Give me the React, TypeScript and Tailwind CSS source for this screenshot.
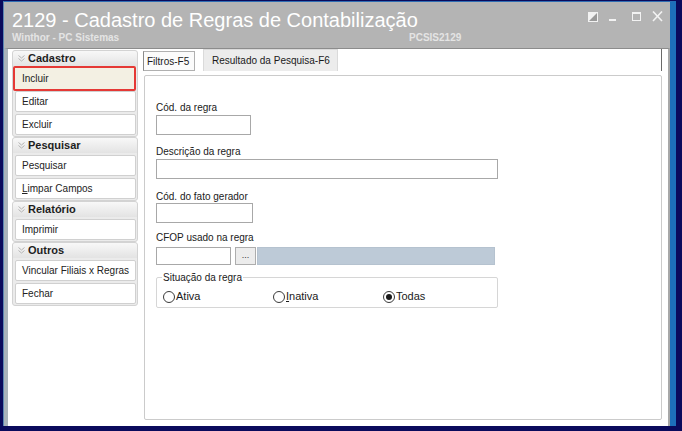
import React from "react";

const groups = [
  { title: "Cadastro", items: ["Incluir", "Editar", "Excluir"] },
  { title: "Pesquisar", items: ["Pesquisar", "Limpar Campos"] },
  { title: "Relatório", items: ["Imprimir"] },
  { title: "Outros", items: ["Vincular Filiais x Regras", "Fechar"] },
];

function Chevron() {
  return (
    <svg width="7" height="7" viewBox="0 0 7 7" className="shrink-0">
      <path d="M0.5 0.5 L3.5 3 L6.5 0.5" fill="none" stroke="#b4b4b4" strokeWidth="1" />
      <path d="M0.5 3.5 L3.5 6 L6.5 3.5" fill="none" stroke="#b4b4b4" strokeWidth="1" />
    </svg>
  );
}

function Radio({ label, checked, underline }: { label: string; checked?: boolean; underline?: boolean }) {
  return (
    <div className="w-[110px] flex items-center h-[13px]">
      <div className="w-[12px] h-[12px] rounded-full border border-[#3a3a3a] bg-white flex items-center justify-center shrink-0">
        {checked && <div className="w-[6px] h-[6px] rounded-full bg-[#1a1a1a]" />}
      </div>
      <span className="ml-[1px] text-[11px] leading-[13px] text-[#1a1a1a]">
        {underline ? (
          <>
            <span className="underline">{label[0]}</span>
            {label.slice(1)}
          </>
        ) : (
          label
        )}
      </span>
    </div>
  );
}

function Label({ children, className = "" }: { children: React.ReactNode; className?: string }) {
  return <div className={"text-[10px] leading-[13px] text-[#1a1a1a] h-[13px] " + className}>{children}</div>;
}

export default function App() {
  return (
    <div className="w-[682px] h-[431px] bg-[#0a0a5c] pt-[1px] pl-[3px] pr-[6px] pb-[5px] font-['Liberation_Sans',Arial,sans-serif] overflow-hidden">
      <div className="h-full flex flex-col border-t border-t-[#2f6db3] border-l border-l-[#5b86b3] border-r-[6px] border-r-[#1d6fba]">
        {/* Title bar */}
        <div className="h-[46px] shrink-0 bg-[#b4b4b4] flex justify-between pl-[8px] pt-[7px]">
          <div className="flex flex-col">
            <div className="text-[20px] leading-[23px] text-white whitespace-nowrap">
              2129 - Cadastro de Regras de Contabilização
            </div>
            <div className="flex text-[10px] leading-[12px] font-bold text-[#e4e4e4] whitespace-nowrap">
              <span className="w-[397px]">Winthor - PC Sistemas</span>
              <span>PCSIS2129</span>
            </div>
          </div>
          <div className="flex items-start mt-[2px] pr-[7px]">
            <svg width="11" height="11" viewBox="0 0 11 11">
              <rect x="0.5" y="1.5" width="9" height="9" fill="#9a9a9a" stroke="#f2f2f2" strokeWidth="1" />
              <polygon points="0.5,1.5 9.5,1.5 0.5,10.5" fill="#f2f2f2" />
            </svg>
            <svg width="10" height="11" viewBox="0 0 10 11" className="ml-[9px]">
              <rect x="1" y="8" width="7" height="2" fill="#f2f2f2" />
            </svg>
            <svg width="11" height="11" viewBox="0 0 11 11" className="ml-[13px]">
              <rect x="1.5" y="1.5" width="8" height="8" fill="none" stroke="#f2f2f2" strokeWidth="1" />
              <rect x="1" y="1" width="9" height="2" fill="#f2f2f2" />
            </svg>
            <svg width="11" height="11" viewBox="0 0 11 11" className="ml-[10px]">
              <path d="M1 0.5 L10 10 M10 0.5 L1 10" stroke="#f2f2f2" strokeWidth="1.6" />
            </svg>
          </div>
        </div>

        {/* Body */}
        <div className="flex-1 flex bg-white border-l-[4px] border-l-[#a9b3ba] border-r-[2px] border-r-[#a8a8a8] border-t border-t-[#8c8c8c] min-h-0">
          {/* Sidebar */}
          <div className="w-[130px] shrink-0 pl-[4px] pt-[1px] flex flex-col">
            {groups.map((g) => (
              <div key={g.title} className="rounded-[3px] border border-[#d3d3d3] bg-[#ebebeb] flex flex-col">
                <div className="h-[15px] flex items-center pl-[5px] gap-[3px] rounded-t-[3px] bg-gradient-to-b from-[#f8f8f8] to-[#e3e3e3]">
                  <Chevron />
                  <span className="text-[11px] leading-[13px] font-bold text-[#1e1e1e]">{g.title}</span>
                </div>
                <div className="flex flex-col gap-[2px] pt-[2px] pl-[2px] pr-[1px] pb-[1px]">
                  {g.items.map((it) =>
                    it === "Incluir" ? (
                      <div
                        key={it}
                        className="-ml-[2px] -my-[2px] h-[25px] bg-[#f3f0e3] border-2 border-[#e53935] rounded-[2px] flex items-center pl-[7px] text-[10px] text-[#222]"
                      >
                        {it}
                      </div>
                    ) : (
                      <div
                        key={it}
                        className="h-[21px] bg-white border border-[#d0d0d0] rounded-[2px] flex items-center pl-[6px] text-[10px] text-[#222] whitespace-nowrap"
                      >
                        {it === "Limpar Campos" ? (
                          <span>
                            <span className="underline">L</span>impar Campos
                          </span>
                        ) : (
                          it
                        )}
                      </div>
                    )
                  )}
                </div>
              </div>
            ))}
          </div>

          {/* Main */}
          <div className="flex-1 flex flex-col pl-[5px] pr-[6px] pb-[6px] min-w-0">
            <div className="h-[22px] shrink-0 flex items-end border-r border-r-[#6a6a6a]">
              <div className="h-[20px] w-[52px] border border-[#b0b0b0] border-l-[#8a8a8a] bg-[#fbfbfb] flex items-center pl-[3px] text-[10px] text-[#1a1a1a]">
                Filtros-F5
              </div>
              <div className="h-[22px] w-[135px] ml-[8px] border border-[#dadada] border-b-0 bg-[#ececec] flex items-center pl-[8px] text-[10px] text-[#1a1a1a] whitespace-nowrap">
                Resultado da Pesquisa-F6
              </div>
            </div>
            <div className="flex-1 mt-[4px] ml-[1px] border border-[#cbcbcb] rounded-[2px] bg-white pl-[11px] pt-[25px] flex flex-col">
              <Label>Cód. da regra</Label>
              <div className="mt-[1px] w-[95px] h-[20px] border border-[#a8a8a8] bg-white" />
              <Label className="mt-[10px]">Descrição da regra</Label>
              <div className="mt-[1px] w-[342px] h-[20px] border border-[#a8a8a8] bg-white" />
              <Label className="mt-[11px]">Cód. do fato gerador</Label>
              <div className="w-[97px] h-[20px] border border-[#a8a8a8] bg-white" />
              <Label className="mt-[8px]">CFOP usado na regra</Label>
              <div className="mt-[3px] flex h-[18px]">
                <div className="w-[75px] h-full border border-[#a8a8a8] bg-white" />
                <div className="ml-[4px] w-[21px] h-full border border-[#adadad] bg-[#ececec] flex items-center justify-center text-[9px] leading-[9px] text-[#333] pb-[1px]">
                  ...
                </div>
                <div className="ml-[1px] w-[238px] h-full bg-[#bdcad7] border border-[#b5c2cf]" />
              </div>
              <fieldset className="mt-[6px] w-[342px] border border-[#d6d6d6] rounded-[2px] pl-[6px] pb-[4px]">
                <legend className="text-[10px] leading-[13px] text-[#1a1a1a] px-[1px] -ml-[1px]">Situação da regra</legend>
                <div className="flex mt-[6px]">
                  <Radio label="Ativa" />
                  <Radio label="Inativa" underline />
                  <Radio label="Todas" checked />
                </div>
              </fieldset>
            </div>
          </div>
        </div>
      </div>
    </div>
  );
}
